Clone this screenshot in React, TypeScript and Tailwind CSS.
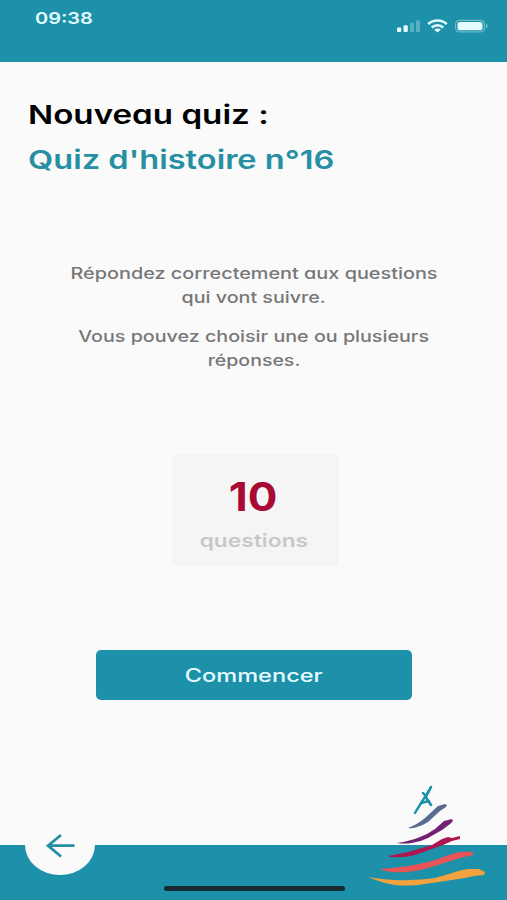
import type { ReactNode } from 'react';

interface WideTextProps {
    children: ReactNode;
    className?: string;
}

// Text is drawn wider than the font's natural proportions
function WideText(props: WideTextProps) {
    const { children, className } = props;
    return (
        <span
            className={`inline-block whitespace-nowrap [font-feature-settings:'cv11'] ${className}`}
        >
            {children}
        </span>
    );
}

function StatusBar() {
    return (
        <header className="flex h-[62px] shrink-0 items-start justify-between bg-[#1c91a9] pl-[35px] pr-[19px] text-[#e4fbff]">
            <time className="pt-[6px] leading-6">
                <WideText className="origin-left scale-x-[1.25] text-[16px] font-semibold">
                    09:38
                </WideText>
            </time>
            <div className="flex items-center gap-[7px] pt-[19px]">
                <svg width="24" height="14" viewBox="0 0 24 14" fill="currentColor">
                    <rect x="1" y="8.5" width="4.3" height="4.5" rx="1.2" />
                    <rect x="7.5" y="6.3" width="4.3" height="6.7" rx="1.2" />
                    <rect x="14" y="3.8" width="4" height="9.2" rx="1.2" opacity=".3" />
                    <rect x="20" y="1.2" width="4" height="11.8" rx="1.2" opacity=".3" />
                </svg>
                <svg
                    width="21"
                    height="14"
                    viewBox="0 0 21 14"
                    fill="none"
                    stroke="currentColor"
                    strokeWidth="2.7"
                >
                    <path d="M1.2 5C6.5 .3 14.5 .3 19.800 5" />
                    <path d="M4.800 8.400C8 5.500 13 5.500 16.200 8.400" />
                    <path
                        d="M7.200 10.800Q10.500 8.300 13.800 10.800L10.500 13.500Z"
                        fill="currentColor"
                        stroke="none"
                    />
                </svg>
                <svg width="33" height="14" viewBox="0 0 33 14" fill="currentColor">
                    <rect
                        x=".6"
                        y="1.300"
                        width="28.800"
                        height="11.600"
                        rx="3.500"
                        fill="none"
                        stroke="currentColor"
                        opacity=".5"
                    />
                    <rect x="2.500" y="3" width="25" height="8.300" rx="2" />
                    <path d="M31 4.800Q32.700 5.500 32.700 7T31 9.200Z" opacity=".5" />
                </svg>
            </div>
        </header>
    );
}

function TreeLogo() {
    return (
        <svg
            className="absolute right-[19px] bottom-[12px]"
            width="120"
            height="105"
            viewBox="0 0 120 105"
        >
            <g fill="none" stroke="#1c91a9" strokeLinecap="round">
                <path d="M47 30Q53 20 57 14L63 4" strokeWidth="2.400" />
                <path d="M55 10Q58 12 59 16L63 22" strokeWidth="2.600" />
                <path d="M57 14L60 10 63 4M53 20L61 18" strokeWidth="2.400" />
            </g>
            <path
                d="M40 45Q50 41 57 35L70 23 77 21 79 22 78 24 72 28 60 39Q54 43 49 44Q44 46 40 45Z"
                fill="#596b91"
            />
            <path
                d="M29 60Q42 58 52 54Q60 51 67 46L76 38 84 36 85 38 82 41 74 47 60 55Q52 59 44 60Q36 61 29 60Z"
                fill="#732174"
            />
            <path
                d="M20 73Q30 71 40 69L64 62 74 56 80 54 84 55 92 53 92 56 84 58 75 62 50 71Q38 75 22 74Z"
                fill="#ad1650"
            />
            <path
                d="M12 86Q27 85 40 83Q52 81 64 78L87 70Q96 68 105 69L105 72 92 75 70 82Q58 86 47 88Q34 90 24 89Q16 88 12 86Z"
                fill="#e95456"
            />
            <path
                d="M-1 94Q26 98 40 97Q54 97 67 95L84 90Q92 87 100 86L111 86 117 89 116 92 106 93 97 95 77 98 50 102Q38 103 27 102Q18 101 8 97Z"
                fill="#f3a33d"
            />
        </svg>
    );
}

function Footer() {
    return (
        <footer className="relative flex h-[55px] shrink-0 items-end justify-center bg-[#1c91a9] pb-[9px] pl-px">
            <button
                aria-label="Retour"
                className="absolute top-[-30px] left-[25px] flex h-[60px] w-[70px] items-center justify-center rounded-[50%] bg-[#fafafa]"
            >
                <svg
                    width="30"
                    height="26"
                    viewBox="0 0 30 26"
                    fill="none"
                    stroke="#278fa3"
                    strokeWidth="2.800"
                >
                    <path d="M29.500 13.700H3M16 3L3 13.700 16 24.500" />
                </svg>
            </button>
            <TreeLogo />
            <div className="relative h-[5px] w-[181px] rounded-full bg-[#142a30]" />
        </footer>
    );
}

function App() {
    return (
        <div className="flex h-screen w-full flex-col overflow-hidden bg-[#fafafa] font-['Inter',sans-serif]">
            <StatusBar />
            <main className="flex min-h-0 flex-1 flex-col items-center">
                <div className="w-full pt-[30px] pl-[28px] text-[26px] leading-[45px] font-semibold">
                    <h1 className="text-black">
                        <WideText className="origin-left scale-x-[1.275]">
                            Nouveau quiz :
                        </WideText>
                    </h1>
                    <h2 className="text-[#278fa3]">
                        <WideText className="origin-left scale-x-[1.253]">
                            Quiz d'histoire n°16
                        </WideText>
                    </h2>
                </div>
                <div className="flex flex-col gap-[16px] pt-[80px] pl-px text-center text-[16px] leading-[23.500px] font-medium text-[#777]">
                    <p>
                        <WideText className="scale-x-[1.24]">
                            Répondez correctement aux questions
                        </WideText>
                        <br />
                        <WideText className="scale-x-[1.23]">qui vont suivre.</WideText>
                    </p>
                    <p>
                        <WideText className="scale-x-[1.23]">
                            Vous pouvez choisir une ou plusieurs
                        </WideText>
                        <br />
                        <WideText className="scale-x-[1.22]">réponses.</WideText>
                    </p>
                </div>
                <section className="mt-[82px] ml-[3px] flex h-[112px] w-[167px] flex-col items-center rounded-[4px] bg-[#f5f5f5] pt-[18px] pr-[3px]">
                    <strong className="text-[40px] leading-[50px] font-bold text-[#a90a35]">
                        <WideText className="scale-x-[1.1]">10</WideText>
                    </strong>
                    <span className="text-[18px] leading-[38px] font-semibold text-[#c8c8c8]">
                        <WideText className="scale-x-[1.265]">questions</WideText>
                    </span>
                </section>
                <button className="mt-[84px] ml-px h-[50px] w-[316px] rounded-[5px] bg-[#1c91a9] text-[18px] font-medium text-[#e4fbff]">
                    <WideText className="scale-x-[1.31]">Commencer</WideText>
                </button>
            </main>
            <Footer />
        </div>
    );
}

export default App;
